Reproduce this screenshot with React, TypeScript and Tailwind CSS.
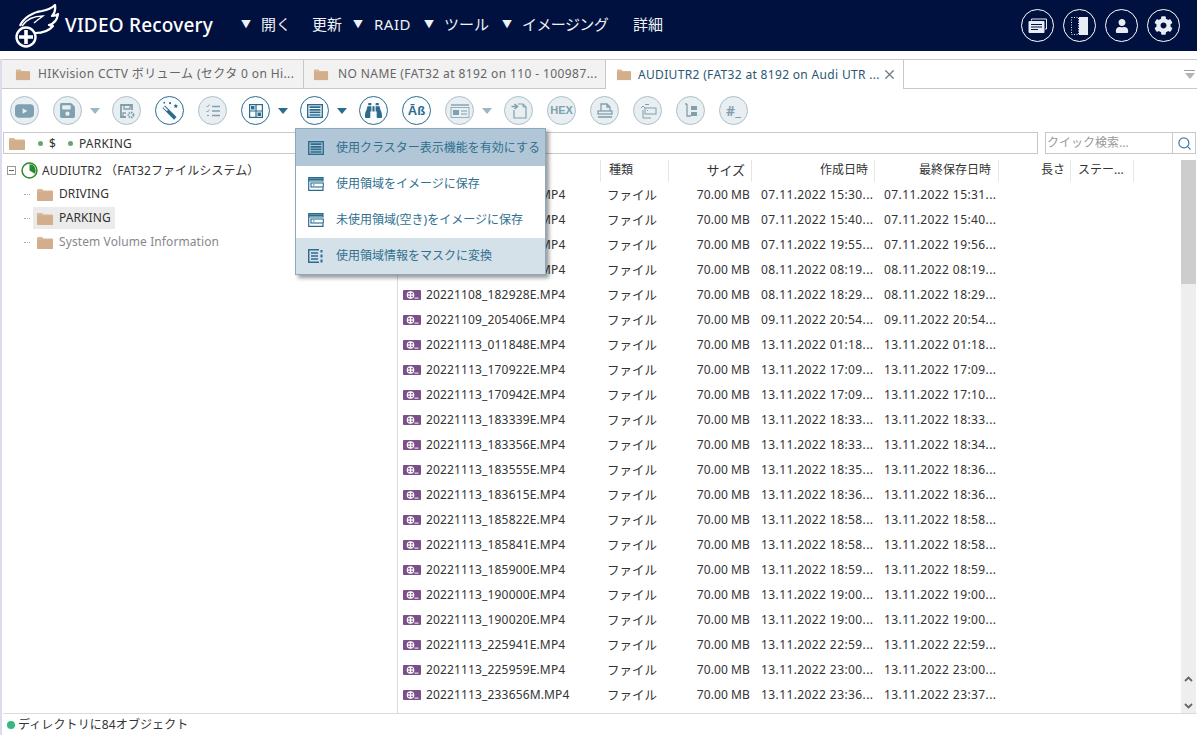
import { ReactNode } from "react";
import { FaBinoculars, FaCog, FaSave, FaUser } from "react-icons/fa";
import { Search, X } from "lucide-react";

const files = [
  ["", "07.11.2022 15:30...", "07.11.2022 15:31..."],
  ["", "07.11.2022 15:40...", "07.11.2022 15:40..."],
  ["", "07.11.2022 19:55...", "07.11.2022 19:56..."],
  ["", "08.11.2022 08:19...", "08.11.2022 08:19..."],
  ["20221108_182928E.MP4", "08.11.2022 18:29...", "08.11.2022 18:29..."],
  ["20221109_205406E.MP4", "09.11.2022 20:54...", "09.11.2022 20:54..."],
  ["20221113_011848E.MP4", "13.11.2022 01:18...", "13.11.2022 01:18..."],
  ["20221113_170922E.MP4", "13.11.2022 17:09...", "13.11.2022 17:09..."],
  ["20221113_170942E.MP4", "13.11.2022 17:09...", "13.11.2022 17:10..."],
  ["20221113_183339E.MP4", "13.11.2022 18:33...", "13.11.2022 18:33..."],
  ["20221113_183356E.MP4", "13.11.2022 18:33...", "13.11.2022 18:34..."],
  ["20221113_183555E.MP4", "13.11.2022 18:35...", "13.11.2022 18:36..."],
  ["20221113_183615E.MP4", "13.11.2022 18:36...", "13.11.2022 18:36..."],
  ["20221113_185822E.MP4", "13.11.2022 18:58...", "13.11.2022 18:58..."],
  ["20221113_185841E.MP4", "13.11.2022 18:58...", "13.11.2022 18:58..."],
  ["20221113_185900E.MP4", "13.11.2022 18:59...", "13.11.2022 18:59..."],
  ["20221113_190000E.MP4", "13.11.2022 19:00...", "13.11.2022 19:00..."],
  ["20221113_190020E.MP4", "13.11.2022 19:00...", "13.11.2022 19:00..."],
  ["20221113_225941E.MP4", "13.11.2022 22:59...", "13.11.2022 22:59..."],
  ["20221113_225959E.MP4", "13.11.2022 23:00...", "13.11.2022 23:00..."],
  ["20221113_233656M.MP4", "13.11.2022 23:36...", "13.11.2022 23:37..."],
];

const Folder = ({ className = "" }: { className?: string }) => (
  <svg viewBox="0 0 16 13" className={`w-[16px] h-[13px] shrink-0 ${className}`}>
    <path d="M0 2a1 1 0 0 1 1-1h4l1.5 1.5H15a1 1 0 0 1 1 1V12a1 1 0 0 1-1 1H1a1 1 0 0 1-1-1z" fill="#d9b896" />
    <rect x="0" y="3.5" width="16" height="9.5" rx="1" fill="#d2ae8c" />
  </svg>
);

const Logo = () => (
  <svg viewBox="0 0 46 44" className="w-[46px] h-[44px] shrink-0">
    <path d="M6 22C9 14 19 8 28 7C34 6 38 4 41 1C42 7 40 10 38 12C41 12 43 11 44 10C43 17 39 20 35 21C37 22 38 22 39 22C35 27 28 29 21 29" fill="none" stroke="#fff" strokeWidth="2.2" strokeLinejoin="round" />
    <path d="M8 22C12 16 20 12 29 12C25 15 22 17 20 19" fill="none" stroke="#fff" strokeWidth="1.4" />
    <circle cx="12" cy="33" r="9.5" fill="#00113f" stroke="#fff" strokeWidth="2.4" />
    <path d="M12 26V40M5 33H19" stroke="#fff" strokeWidth="3.6" />
  </svg>
);

const TopCircle = ({ children }: { children: ReactNode }) => (
  <div className="w-[33px] h-[33px] rounded-full border border-white flex items-center justify-center text-[#e8edf5]">
    {children}
  </div>
);

const ToolButton = ({ on = false, caret = false, children }: { on?: boolean; caret?: boolean; children: ReactNode }) => (
  <>
    <div
      className={`w-[29px] h-[29px] shrink-0 rounded-full border flex items-center justify-center ${
        on ? "border-[#2b6c8e] bg-[#fbfcfd] text-[#2b6c8e]" : "border-[#a9c1cd] bg-[#e9eef1] text-[#7fa0b1]"
      } ${caret ? "mr-[7px]" : "mr-[14px]"}`}
    >
      {children}
    </div>
    {caret && (
      <div className="w-[12px] mr-[11px] flex justify-center">
        <div
          className={`w-0 h-0 border-l-[5px] border-r-[5px] border-t-[6px] border-l-transparent border-r-transparent ${
            on ? "border-t-[#2b6c8e]" : "border-t-[#9db6c3]"
          }`}
        />
      </div>
    )}
  </>
);

const Ic = ({ children }: { children: ReactNode }) => (
  <svg viewBox="0 0 20 20" className="w-[20px] h-[20px]" fill="none" stroke="currentColor" strokeWidth="1.2">
    {children}
  </svg>
);

const ClusterIcon = () => (
  <svg viewBox="0 0 16 14" className="w-[16px] h-[14px]" fill="none" stroke="currentColor">
    <rect x="0.7" y="0.7" width="14.6" height="12.6" strokeWidth="1.4" />
    <path d="M2.500 3.200h11M2.500 5.800h11M2.500 8.400h11M2.500 11h11" strokeWidth="1.700" />
  </svg>
);

const SaveUsedIcon = () => (
  <svg viewBox="0 0 16 14" className="w-[16px] h-[14px]" fill="none" stroke="currentColor">
    <path d="M.7 4V.7H15V4zM.7 4v9.300H15V10.500" strokeWidth="1.200" />
    <path d="M1 2.300h14" strokeWidth="2" />
    <rect x="3" y="6" width="12.300" height="4" strokeWidth="1.100" fill="#fff" />
    <path d="M5 8h1.500" strokeWidth="1.200" />
  </svg>
);

const MaskIcon = () => (
  <svg viewBox="0 0 16 14" className="w-[16px] h-[14px]" fill="none" stroke="currentColor">
    <path d="M11 .7H.7v12.6H11" strokeWidth="1.5" />
    <path d="M3 4h7M3 7h7M3 10h7" strokeWidth="1.4" />
    <path d="M13.5 1v2.5M13.5 5.5v3M13.5 10.500v3" strokeWidth="2" />
  </svg>
);

const ReelIcon = () => (
  <svg viewBox="0 0 18 10" className="w-[18px] h-[10px] shrink-0">
    <rect width="18" height="10" rx="1" fill="#7b4f87" />
    <circle cx="7.500" cy="5" r="3.800" fill="#fff" />
    <g fill="#7b4f87">
      <circle cx="6" cy="3.700" r="0.900" />
      <circle cx="9" cy="3.700" r="0.900" />
      <circle cx="6" cy="6.300" r="0.900" />
      <circle cx="9" cy="6.300" r="0.900" />
    </g>
    <rect x="11.500" y="7.600" width="4" height="1" fill="#fff" />
  </svg>
);

const menuItems = [
  { label: "使用クラスター表示機能を有効にする", icon: <ClusterIcon />, row: "h-[37px] bg-[#b1c6d6]" },
  { label: "使用領域をイメージに保存", icon: <SaveUsedIcon />, row: "h-[36px] bg-white" },
  { label: "未使用領域(空き)をイメージに保存", icon: <SaveUsedIcon />, row: "h-[36px] bg-white" },
  { label: "使用領域情報をマスクに変換", icon: <MaskIcon />, row: "h-[36px] bg-[#d5e1e9]" },
];

const treeItems = [
  { name: "DRIVING", text: "text-[#333]", selected: false },
  { name: "PARKING", text: "text-[#333]", selected: true },
  { name: "System Volume Information", text: "text-[#888]", selected: false },
];

const App = () => {
  return (
    <div className="relative h-screen w-full overflow-hidden bg-white flex flex-col font-['Noto_Sans','Noto_Sans_CJK_JP',sans-serif] text-[12px] text-[#333]">
      {/* top bar */}
      <header className="h-[51px] shrink-0 bg-[#00113f] flex items-center text-white pl-[14px] pr-[17px]">
        <Logo />
        <span className="ml-[5px] w-[176px] text-[19px] font-medium tracking-[0.2px] whitespace-nowrap">VIDEO Recovery</span>
        <nav className="flex items-center text-[15px] text-[#eef1f6] -mt-[3px]">
          <span className="text-[10px] mr-[10px]">▼</span>
          <span className="mr-[21px]">開く</span>
          <span className="mr-[11px]">更新</span>
          <span className="text-[10px] mr-[11px]">▼</span>
          <span className="mr-[13px] tracking-[0.5px]">RAID</span>
          <span className="text-[10px] mr-[10px]">▼</span>
          <span className="mr-[13px]">ツール</span>
          <span className="text-[10px] mr-[10px]">▼</span>
          <span className="mr-[25px] tracking-[-0.6px]">イメージング</span>
          <span>詳細</span>
        </nav>
        <div className="ml-auto flex items-center gap-[9px]">
          <TopCircle>
            <svg viewBox="0 0 20 16" className="w-[21px] h-[16px]" fill="none" stroke="currentColor">
              <path d="M4 2.500V1h15v10h-1.500" strokeWidth="1" />
              <rect x="1" y="3" width="16" height="12" rx="1" fill="currentColor" stroke="none" />
              <path d="M3.500 6.500h11M3.500 9h11M3.500 11.500h7" stroke="#00113f" strokeWidth="1.200" />
            </svg>
          </TopCircle>
          <TopCircle>
            <svg viewBox="0 0 17 18" className="w-[17px] h-[18px]">
              <rect x="0.500" y="0.500" width="7" height="17" fill="none" stroke="currentColor" strokeDasharray="1 1.500" />
              <rect x="8" y="0" width="9" height="18" fill="currentColor" />
            </svg>
          </TopCircle>
          <TopCircle>
            <FaUser size={14} />
          </TopCircle>
          <TopCircle>
            <FaCog size={19} />
          </TopCircle>
        </div>
      </header>

      <div className="flex-1 min-h-0 mt-[8px] border-l-2 border-[#dcdcee] flex flex-col">
        {/* tabs */}
        <div className="h-[30px] shrink-0 flex border-y border-[#c8c8c8] relative">
          <div className="w-[302px] -my-px h-[30px] shrink-0 border-y border-r border-[#c8c8c8] bg-[#f2f2f2] flex items-center pl-[13px] text-[#666]">
            <Folder className="scale-90" />
            <span className="ml-[7px] tracking-[0.38px] whitespace-nowrap">HIKvision CCTV ボリューム (セクタ 0 on Hi...</span>
          </div>
          <div className="w-[302px] -my-px h-[30px] shrink-0 border-y border-r border-[#c8c8c8] bg-[#f2f2f2] flex items-center pl-[9px] text-[#666]">
            <Folder className="scale-90" />
            <span className="ml-[9px] tracking-[0.4px] whitespace-nowrap">NO NAME (FAT32 at 8192 on 110 - 100987...</span>
          </div>
          <div className="w-[298px] -my-px h-[30px] shrink-0 border-t border-r border-[#c8c8c8] bg-white flex items-center pl-[10px] text-[#2a5674]">
            <Folder className="scale-90" />
            <span className="ml-[6px] tracking-[0.33px] whitespace-nowrap">AUDIUTR2 (FAT32 at 8192 on Audi UTR ...</span>
            <X size={15} className="ml-auto mr-[6px] text-[#6b7c88]" strokeWidth={2} />
          </div>
          <div className="ml-auto mr-[1px] w-[13px] flex flex-col items-center justify-center">
            <div className="w-[11px] h-px bg-[#a0a0a0] mb-[2px]" />
            <div className="w-0 h-0 border-l-[5px] border-r-[5px] border-t-[6px] border-l-transparent border-r-transparent border-t-[#b4b4b4]" />
          </div>
        </div>

        {/* toolbar */}
        <div className="h-[44px] shrink-0 flex items-center pl-[8px] -mt-px pt-[1px]">
          <ToolButton>
            <svg viewBox="0 0 20 14" className="w-[19px] h-[14px]">
              <rect width="20" height="14" rx="4" fill="currentColor" />
              <path d="M8 4l5 3-5 3z" fill="#e9eef1" />
            </svg>
          </ToolButton>
          <ToolButton caret>
            <FaSave size={17} />
          </ToolButton>
          <ToolButton>
            <Ic>
              <path d="M9 16H4V4h11v5" strokeWidth="1.800" />
              <path d="M7 4v4h6V4" strokeWidth="1.300" />
              <path d="M6 16v-4h3" strokeWidth="1.300" />
              <circle cx="14" cy="14" r="2.500" strokeWidth="2" strokeDasharray="1.500 0.800" />
            </Ic>
          </ToolButton>
          <ToolButton on>
            <svg viewBox="0 0 20 20" className="w-[21px] h-[21px]">
              <path d="M4.500 6.500L15.500 17.500" stroke="currentColor" strokeWidth="3.400" />
              <path d="M4.500 6.500L8 10" stroke="#fff" strokeWidth="1.600" />
              <path d="M11 2.500l.7 1.400 1.500.2-1.100 1 .3 1.500-1.400-.7-1.400.7.3-1.500-1.100-1 1.500-.2z" fill="currentColor" transform="translate(5 1)" />
              <circle cx="10.500" cy="3" r="1" fill="currentColor" />
              <circle cx="5" cy="2.500" r="0.900" fill="currentColor" />
            </svg>
          </ToolButton>
          <ToolButton>
            <Ic>
              <path d="M9 5.500h8M9 10h8M9 14.500h8" strokeWidth="1.400" />
              <path d="M3.500 5l1 1 2-2.500M3.500 10l1 1 2-2.500M4 14.500h2" strokeWidth="1" />
            </Ic>
          </ToolButton>
          <ToolButton on caret>
            <svg viewBox="0 0 14 14" className="w-[14px] h-[14px]" fill="none" stroke="currentColor">
              <rect x="0.600" y="0.600" width="12.800" height="12.800" strokeWidth="1.200" />
              <path d="M7 1v12M1 7h12" strokeWidth="1.200" />
              <rect x="2" y="2" width="3.500" height="3.500" fill="currentColor" stroke="none" />
              <rect x="8.500" y="8.500" width="3.500" height="3.500" fill="currentColor" stroke="none" />
            </svg>
          </ToolButton>
          <ToolButton on caret>
            <ClusterIcon />
          </ToolButton>
          <ToolButton on>
            <FaBinoculars size={17} />
          </ToolButton>
          <ToolButton on>
            <span className="text-[13px] leading-none font-bold font-['Liberation_Sans',sans-serif]">Āß</span>
          </ToolButton>
          <ToolButton caret>
            <svg viewBox="0 0 20 14" className="w-[20px] h-[14px]" fill="none" stroke="currentColor">
              <path d="M1 1h18" strokeWidth="1.400" />
              <rect x="1" y="3.500" width="18" height="10" strokeWidth="0.800" />
              <rect x="3" y="6" width="6" height="5" fill="currentColor" stroke="none" />
              <path d="M11 7h6M11 10h6" strokeWidth="1.200" />
            </svg>
          </ToolButton>
          <ToolButton>
            <Ic>
              <path d="M5 9v8h12V6l-3-3H9" strokeWidth="1.200" />
              <path d="M14 3v3h3" strokeWidth="1" />
              <path d="M2.500 5.500h5M5.500 3l3 2.500L5.500 8" strokeWidth="1.600" />
            </Ic>
          </ToolButton>
          <ToolButton>
            <span className="text-[11px] font-bold leading-none font-['Liberation_Sans',sans-serif]">HEX</span>
          </ToolButton>
          <ToolButton>
            <Ic>
              <path d="M6 10V3h6l3 3v4M12 3v3h3" strokeWidth="1.300" />
              <rect x="3" y="10" width="14" height="3" strokeWidth="1.300" />
              <path d="M3 16h14" strokeWidth="1.600" />
            </Ic>
          </ToolButton>
          <ToolButton>
            <Ic>
              <rect x="7" y="7" width="11" height="6" strokeWidth="1" />
              <path d="M5 9v8h8M3 7l2-2 2 2M7 3.500h4M9 9.500h1" strokeWidth="1" />
            </Ic>
          </ToolButton>
          <ToolButton>
            <Ic>
              <path d="M6 3v12h4M4 3h2" strokeWidth="1.300" />
              <rect x="10" y="5" width="6" height="4" fill="currentColor" stroke="none" />
              <rect x="10" y="11" width="6" height="4" fill="currentColor" stroke="none" />
            </Ic>
          </ToolButton>
          <ToolButton>
            <span className="text-[14px] font-bold leading-none">#_</span>
          </ToolButton>
        </div>

        {/* path + quick search */}
        <div className="h-[22px] shrink-0 flex pl-[1px] pr-[1px] gap-[7px]">
          <div className="w-[1035px] border border-[#c8c8c8] flex items-center pl-[5px] text-[#333]">
            <Folder />
            <span className="ml-[13px] w-[5px] h-[5px] rounded-full bg-[#67a56f]" />
            <span className="ml-[6px] pt-px">$</span>
            <span className="ml-[12px] w-[5px] h-[5px] rounded-full bg-[#67a56f]" />
            <span className="ml-[6px] pt-px tracking-[0.3px]">PARKING</span>
          </div>
          <div className="flex-1 border border-[#c8c8c8] flex items-center">
            <span className="flex-1 pl-[1px] text-[#999]">クイック検索...</span>
            <div className="w-[23px] h-full border-l border-[#c8c8c8] flex items-center justify-center">
              <Search size={15} className="text-[#3f7fb0]" />
            </div>
          </div>
        </div>

        <div className="flex-1 min-h-0 flex">
          {/* tree */}
          <div className="w-[396px] shrink-0 border-r border-[#dcdcdc] pt-[5px] pl-[5px]">
            <div className="h-[23px] flex items-center">
              <div className="w-[9px] h-[9px] border border-[#999] flex items-center justify-center">
                <div className="w-[5px] h-px bg-[#666]" />
              </div>
              <svg viewBox="0 0 16 16" className="w-[17px] h-[17px] ml-[5px]">
                <circle cx="8" cy="8" r="7" fill="#fff" stroke="#2a8a2a" strokeWidth="1.400" />
                <path d="M8 8V2A6 6 0 0 1 13 11z" fill="#2a8a2a" />
              </svg>
              <span className="ml-[4px] tracking-[0.1px]">AUDIUTR2 （FAT32ファイルシステム）</span>
            </div>
            {treeItems.map((item) => (
              <div key={item.name} className="h-[24px] flex items-center pl-[17px]">
                <div className="w-[6px] border-t border-dotted border-[#aaa]" />
                <div className={`ml-[3px] pl-[4px] pr-[2px] h-[22px] flex items-center ${item.selected ? "bg-[#ebebeb]" : ""}`}>
                  <Folder />
                  <span className={`ml-[6px] tracking-[0.1px] ${item.selected ? "mr-[2px]" : ""} ${item.text}`}>{item.name}</span>
                </div>
              </div>
            ))}
          </div>

          {/* file list */}
          <div className="flex-1 min-w-0 pt-[6px] flex">
            <div className="flex-1 min-w-0 overflow-hidden">
              <div className="h-[22px] flex text-[12px] text-[#333]">
                <div className="w-[203px] border-r border-[#e6e6e6]" />
                <div className="w-[68px] pl-[8px] border-r border-[#e6e6e6] leading-[20px]">種類</div>
                <div className="w-[83px] pr-[6px] text-right border-r border-[#e6e6e6] text-[13px] leading-[20px]">サイズ</div>
                <div className="w-[123px] pr-[6px] text-right border-r border-[#e6e6e6] leading-[20px]">作成日時</div>
                <div className="w-[124px] pr-[7px] text-right border-r border-[#e6e6e6] leading-[20px]">最終保存日時</div>
                <div className="w-[72px] pr-[5px] text-right border-r border-[#e6e6e6] leading-[20px]">長さ</div>
                <div className="w-[63px] pl-[7px] border-r border-[#e6e6e6] leading-[20px]">ステー...</div>
              </div>
              {files.map((row) => (
                <div key={row[1]} className="h-[25px] flex items-center whitespace-nowrap">
                  <div className="w-[203px] pl-[5px] flex items-center">
                    <ReelIcon />
                    {row[0] ? (
                      <span className="ml-[5px] tracking-[0.15px]">{row[0]}</span>
                    ) : (
                      <span className="ml-[119px] tracking-[0.15px]">MP4</span>
                    )}
                  </div>
                  <div className="w-[68px] pl-[6px] pt-[3px] text-[12.5px]">ファイル</div>
                  <div className="w-[83px] pr-[2px] text-right tracking-[0.1px]">70.00 MB</div>
                  <div className="w-[123px] pl-[9px] tracking-[0.4px]">{row[1]}</div>
                  <div className="w-[124px] pl-[9px] tracking-[0.4px]">{row[2]}</div>
                </div>
              ))}
            </div>
            {/* scrollbar */}
            <div className="w-[15px] mr-[1px] shrink-0 bg-[#eeeeee] flex flex-col items-center">
              <div className="w-full h-[124px] bg-[#cdcdcd]" />
              <svg viewBox="0 0 9 6" className="w-[9px] h-[6px] mt-auto text-[#666]">
                <path d="M1 5l3.500-3.500L8 5" fill="none" stroke="currentColor" strokeWidth="1.800" />
              </svg>
              <svg viewBox="0 0 9 6" className="w-[9px] h-[6px] mt-[21px] mb-[4px] text-[#666]">
                <path d="M1 1l3.500 3.500L8 1" fill="none" stroke="currentColor" strokeWidth="1.800" />
              </svg>
            </div>
          </div>
        </div>

        {/* status bar */}
        <div className="h-[22px] shrink-0 border-t border-[#dcdcdc] flex items-center pl-[4px] ml-[1px] text-[12px] tracking-[0.1px] text-[#333]">
          <span className="w-[8px] h-[8px] rounded-full bg-[#35b97f]" />
          <span className="ml-[3px]">ディレクトリに84オブジェクト</span>
        </div>
      </div>

      {/* dropdown menu */}
      <div className="absolute left-[295px] top-[128px] w-[251px] border border-[#8aa9ba] bg-white shadow-[3px_3px_4px_rgba(0,0,0,0.4)] text-[#2f7190]">
        {menuItems.map((item) => (
          <div key={item.label} className={`flex items-center pl-[12px] ${item.row}`}>
            <span className="text-[#2b6c8e] flex">{item.icon}</span>
            <span className="ml-[12px] whitespace-nowrap">{item.label}</span>
          </div>
        ))}
      </div>
    </div>
  );
};

export default App;
